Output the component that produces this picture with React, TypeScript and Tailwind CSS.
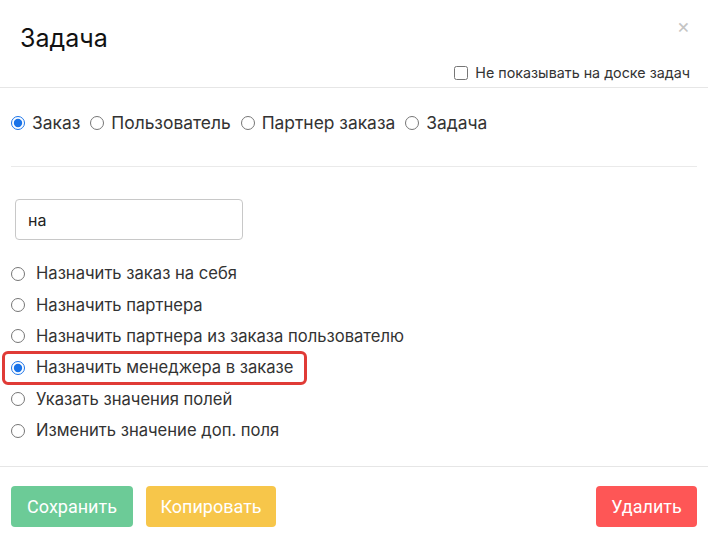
import React from "react";

const items = [
  "Назначить заказ на себя",
  "Назначить партнера",
  "Назначить партнера из заказа пользователю",
  "Назначить менеджера в заказе",
  "Указать значения полей",
  "Изменить значение доп. поля",
];

export default function App() {
  return (
    <div
      className="relative w-[708px] h-[540px] bg-white text-[#222]"
      style={{ fontFamily: "Inter, 'Noto Sans', sans-serif" }}
    >
      <button className="absolute right-[18px] top-[16px] text-[20px] leading-[20px] text-[#c4c4c4]">
        ×
      </button>
      <div className="border-b border-[#e6e6e6] pt-[22px] pb-[4px]">
        <div className="px-5 text-[25px] leading-[32px] text-[#111]">Задача</div>
        <div className="mt-[9px] flex justify-end pr-[18px]">
          <label className="flex items-center gap-[7px] text-[14.3px] leading-[20px] text-[#333]">
            <input type="checkbox" className="w-[14px] h-[14px] m-0" />
            Не показывать на доске задач
          </label>
        </div>
      </div>
      <div className="px-[11px]">
        <div className="pt-[23px] flex items-center text-[17.4px] leading-[24px] text-[#333]">
          {["Заказ", "Пользователь", "Партнер заказа", "Задача"].map((t, i) => (
            <label key={t} className="flex items-center mr-[10px]">
              <input
                type="radio"
                name="type"
                defaultChecked={i === 0}
                className="w-[14px] h-[14px] m-0 mr-[7px] accent-[#1a73e8]"
              />
              {t}
            </label>
          ))}
        </div>
        <div className="mt-[31px] border-t border-[#eaeaea]" />
        <div className="mt-[32px] pl-[4px]">
          <div className="w-[228px] h-[41px] rounded-[4px] border border-[#c8c8c8] flex items-center px-[12px] text-[16px] text-[#222]">
            на
          </div>
        </div>
      </div>
      <div className="mt-[18px] pl-[11px] flex flex-col text-[16.6px] text-[#333]">
        {items.map((t, i) => (
          <label key={t} className="relative flex items-center h-[31.4px]">
            {i === 3 && (
              <span className="absolute left-[-9px] top-[-1px] w-[305px] h-[34px] rounded-[6px] border-[3px] border-[#e03b36]" />
            )}
            <input
              type="radio"
              name="action"
              defaultChecked={i === 3}
              className="w-[14px] h-[14px] m-0 mr-[11px] accent-[#1a73e8]"
            />
            {t}
          </label>
        ))}
      </div>
      <div className="absolute left-0 right-0 top-[466px] border-t border-[#e6e6e6] pt-[19px] px-[11px] flex">
        <button className="h-[41px] w-[122px] rounded-[4px] bg-[#6ccb97] text-white text-[18px]" style={{ fontFamily: "Roboto, sans-serif" }}>
          Сохранить
        </button>
        <button className="ml-[13px] h-[41px] w-[130px] rounded-[4px] bg-[#f7c64a] text-white text-[18px]" style={{ fontFamily: "Roboto, sans-serif" }}>
          Копировать
        </button>
        <button className="ml-auto h-[41px] w-[101px] rounded-[4px] bg-[#fe5656] text-white text-[18px]" style={{ fontFamily: "Roboto, sans-serif" }}>
          Удалить
        </button>
      </div>
    </div>
  );
}
